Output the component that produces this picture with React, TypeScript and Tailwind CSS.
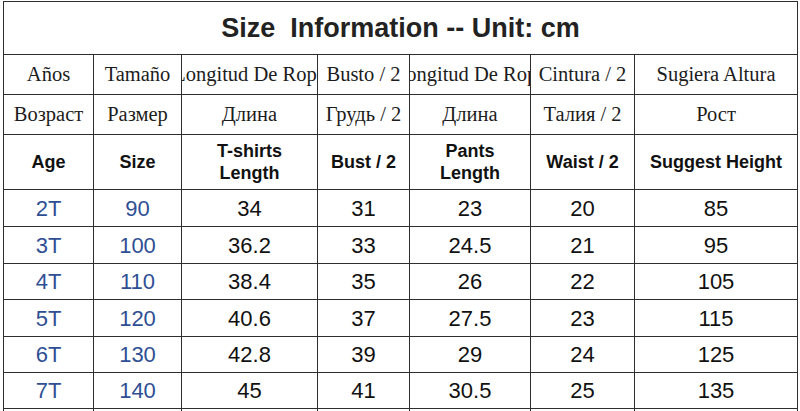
import React from "react";

const spanish = ["Años", "Tamaño", "Longitud De Ropa", "Busto / 2", "Longitud De Ropa", "Cintura / 2", "Sugiera Altura"];
const russian = ["Возраст", "Размер", "Длина", "Грудь / 2", "Длина", "Талия / 2", "Рост"];
const english = ["Age", "Size", "T-shirts\nLength", "Bust / 2", "Pants\nLength", "Waist / 2", "Suggest Height"];

const data = [
  ["2T", "90", "34", "31", "23", "20", "85"],
  ["3T", "100", "36.2", "33", "24.5", "21", "95"],
  ["4T", "110", "38.4", "35", "26", "22", "105"],
  ["5T", "120", "40.6", "37", "27.5", "23", "115"],
  ["6T", "130", "42.8", "39", "29", "24", "125"],
  ["7T", "140", "45", "41", "30.5", "25", "135"],
];

const cell = "bg-white flex items-center justify-center overflow-hidden whitespace-nowrap";
const sans = "font-['Liberation_Sans',Arial,sans-serif]";
const serif = "font-['Liberation_Serif','Times_New_Roman',serif]";

export default function App() {
  return (
    <div className="w-[800px] h-[411px] overflow-hidden bg-white">
      <div className="ml-[3px] mt-[1px] w-[795px] grid grid-cols-[89px_87px_135px_91px_120px_103px_162px] grid-rows-[52px_39px_39px_54px_36px_36px_35px_36px_35px_35px_36px] gap-px p-px bg-[#2e2e2e]">
        <div className={`${cell} ${sans} col-span-7 text-[27px] font-bold text-[#222222] whitespace-pre`}>
          Size  Information -- Unit: cm
        </div>
        {spanish.map((t, i) => (
          <div key={"s" + i} className={`${cell} ${serif} text-[20.5px] text-[#1c1c1c]`}>
            {t}
          </div>
        ))}
        {russian.map((t, i) => (
          <div key={"r" + i} className={`${cell} ${serif} text-[20.5px] text-[#1c1c1c]`}>
            {t}
          </div>
        ))}
        {english.map((t, i) => (
          <div
            key={"e" + i}
            className={`${cell} ${sans} text-[18px] font-bold text-[#111111] text-center whitespace-pre leading-[22px]`}
          >
            {t}
          </div>
        ))}
        {data.map((row, r) =>
          row.map((v, c) => (
            <div
              key={r + "-" + c}
              className={`${cell} ${sans} text-[22px] ${c < 2 ? "text-[#2f4f94]" : "text-[#111111]"}`}
            >
              {v}
            </div>
          ))
        )}
        {Array.from({ length: 7 }).map((_, c) => (
          <div key={"x" + c} className={cell} />
        ))}
      </div>
    </div>
  );
}
